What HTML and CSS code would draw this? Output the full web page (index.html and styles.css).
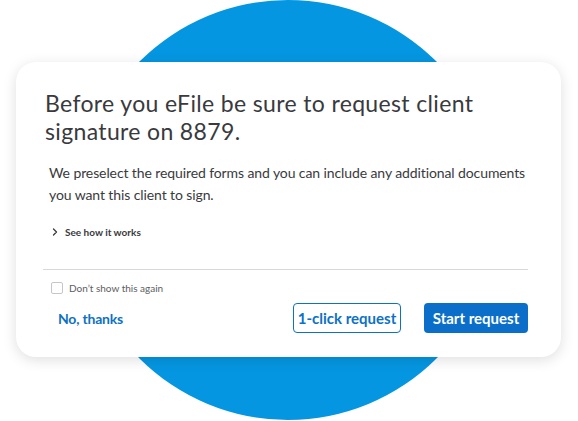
FILE: index.html
```html
<!DOCTYPE html>
<html>
<head>
<title>Request client signature</title>
<link rel="stylesheet" href="styles.css">
</head>
<body>
<div class="stage">
  <div class="circle"></div>
  <div class="card">
    <h1 class="title">Before you eFile be sure to request client signature on 8879.</h1>
    <p class="lead">We preselect the required forms and you can include any additional documents you want this client to sign.</p>
    <div class="more">
      <svg class="chev" width="6" height="8" viewBox="0 0 6 8"><path d="M1.5 1 L4.5 4 L1.5 7" fill="none" stroke="#393a3d" stroke-width="1.3" stroke-linecap="round" stroke-linejoin="round"/></svg>
      <span>See how it works</span>
    </div>
    <hr class="divider">
    <label class="again"><span class="box"></span>Don’t show this again</label>
    <div class="actions">
      <a class="link">No, thanks</a>
      <div class="buttons">
        <button class="btn outline">1-click request</button>
        <button class="btn primary">Start request</button>
      </div>
    </div>
  </div>
</div>
</body>
</html>
```

FILE: styles.css
```css
body {
    margin: 0;
    background: #ffffff;
    font-family: Lato, "Open Sans", sans-serif;
    color: #393a3d;
}

.stage {
    position: relative;
    width: 578px;
    height: 421px;
    overflow: hidden;
    padding: 62px 0 0 16px;
    box-sizing: border-box;
}

.circle {
    position: absolute;
    left: 78px;
    top: 0;
    width: 420px;
    height: 420px;
    border-radius: 50%;
    background: #0596e1;
}

.card {
    position: relative;
    width: 545px;
    height: 295px;
    box-sizing: border-box;
    background: #ffffff;
    border-radius: 20px;
    box-shadow: 0 3px 14px rgba(0, 0, 0, 0.13);
    padding: 27px 33px 0 27px;
}

.title {
    margin: 0 0 0 2px;
    font-size: 23px;
    font-weight: 400;
    letter-spacing: 0.35px;
    line-height: 28px;
    color: #393a3d;
}

.lead {
    margin: 17px 0 0 6px;
    font-size: 14px;
    letter-spacing: -0.1px;
    line-height: 22px;
    color: #393a3d;
}

.more {
    display: flex;
    align-items: center;
    gap: 7px;
    margin: 19px 0 0 9px;
    font-size: 10px;
    font-weight: 700;
    height: 14px;
}

.divider {
    border: none;
    border-top: 1px solid #d6d8dc;
    margin: 30px 0 0 0;
}

.again {
    display: flex;
    align-items: center;
    gap: 6px;
    margin: 12px 0 0 8px;
    font-size: 10px;
    color: #5c5d62;
    height: 12px;
}

.box {
    width: 10px;
    height: 10px;
    border: 1px solid #c4c6ca;
    border-radius: 2px;
}

.actions {
    display: flex;
    align-items: center;
    justify-content: space-between;
    margin-top: 9px;
}

.link {
    margin-left: 15px;
    font-size: 14px;
    font-weight: 700;
    letter-spacing: -0.2px;
    color: #0d71c5;
}

.buttons {
    display: flex;
    gap: 23px;
}

.btn {
    height: 30px;
    border-radius: 4px;
    font-family: Lato, "Open Sans", sans-serif;
    font-size: 15px;
    font-weight: 700;
    padding: 0;
    white-space: nowrap;
    box-sizing: border-box;
}

.outline {
    width: 108px;
    background: #ffffff;
    border: 1px solid #0d71c5;
    color: #0d71c5;
}

.primary {
    width: 104px;
    background: #0b6fc9;
    border: none;
    color: #ffffff;
}
```
